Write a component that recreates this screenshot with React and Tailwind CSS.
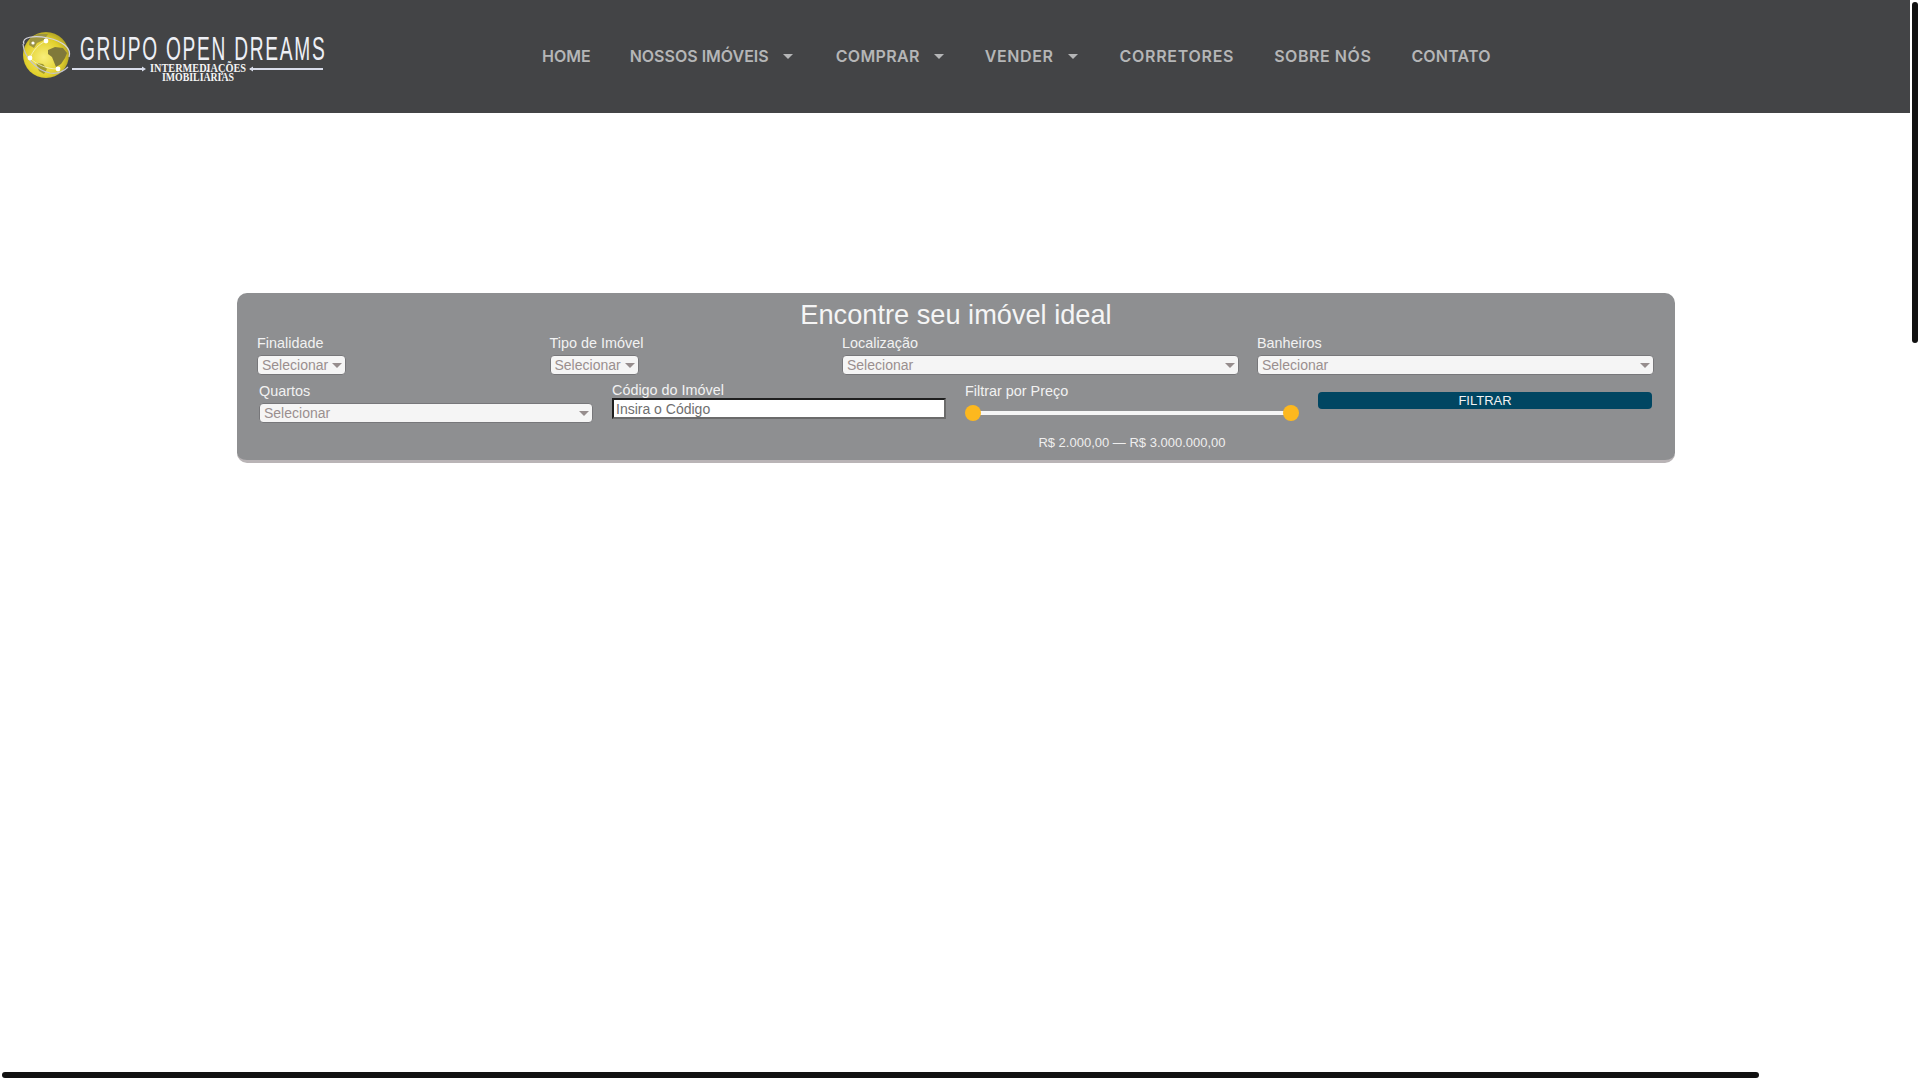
import { useState } from "react";

const font = "font-['Liberation_Sans',Arial,sans-serif]";

function Caret({ className }) {
  return (
    <svg width="10" height="5" viewBox="0 0 10 5" className={className}>
      <path d="M0 0h10L5 5z" fill="currentColor" />
    </svg>
  );
}

function Logo() {
  return (
    <svg width="340" height="113" viewBox="0 0 340 113" className="shrink-0">
      <defs>
        <radialGradient id="globe" cx="0.45" cy="0.55" r="0.62">
          <stop offset="0" stopColor="#f8ee7a" />
          <stop offset="0.65" stopColor="#e2d02c" />
          <stop offset="1" stopColor="#a39622" />
        </radialGradient>
      </defs>
      <circle cx="46" cy="55" r="23" fill="url(#globe)" />
      <path d="M48 50l7-3 8 1 4 5-2 5-4 6-5 3-2-5-2-5-4-3z" fill="#80793a" />
      <path d="M30 38l8-4 10 0-4 6-7 3-3 5-5-3z" fill="#9c9440" />
      <path d="M36 63l7 1 4 5-3 5-5-3z" fill="#9f972f" />
      <path d="M24 44c-3-7 10-9 24-6s24 10 21 19" fill="none" stroke="#d4d4dc" strokeWidth="1.2" />
      <path d="M23 44c1 12 12 26 27 29 6 1 13-1 18-6" fill="none" stroke="#c2c2cc" strokeWidth="1.2" />
      <path d="M30 58c3-8 9-14 16-17M30 58c7 7 17 11 28 11" fill="none" stroke="#f4f2c8" strokeWidth="0.8" />
      <circle cx="30" cy="58" r="2.4" fill="#fff" />
      <circle cx="58" cy="69" r="2.4" fill="#fff" />
      <circle cx="46" cy="41" r="2.4" fill="#fff" />
      <circle cx="33" cy="43" r="1.6" fill="#fff" />
      <text transform="translate(80 60) scale(0.58 1)" letterSpacing="3" fontFamily="'Liberation Sans'" fontSize="33" fill="#eef0f6">GRUPO OPEN DREAMS</text>
      <path d="M72 69h72M250 69h73" stroke="#d8dcea" strokeWidth="2" />
      <path d="M142 66.5l4 2.5-4 2.5zM253 66.5l-4 2.5 4 2.5z" fill="#d8dcea" />
      <text x="198" y="72" textAnchor="middle" fontFamily="'Liberation Serif'" fontWeight="700" fontSize="12" fill="#f4f4f4" textLength="96" lengthAdjust="spacingAndGlyphs">INTERMEDIAÇÕES</text>
      <text x="198" y="81" textAnchor="middle" fontFamily="'Liberation Serif'" fontWeight="700" fontSize="12" fill="#f4f4f4" textLength="72" lengthAdjust="spacingAndGlyphs">IMOBILIÁRIAS</text>
    </svg>
  );
}

function NavItem({ label, sub, className = "" }) {
  return (
    <a href="#" className={`flex items-center px-5 pb-px font-['Inter',sans-serif] text-[16px] font-semibold text-[#b5b6b7] ${className}`}>
      {label}
      {sub && <Caret className="ml-[14px] mr-[3px] text-[#b5b6b7]" />}
    </a>
  );
}

function FakeSelect({ className }) {
  return (
    <div className={`flex h-5 items-center justify-between rounded-[4px] border border-[#77777a] bg-[#f5f5f5] pl-1 pr-[3px] text-[14px] text-[#9a8f8f] ${className}`}>
      <span>Selecionar</span>
      <Caret className="text-[#968d8d]" />
    </div>
  );
}

function Label({ children }) {
  return <div className="h-4 text-[14.4px] leading-4 text-[#f2f2f2]">{children}</div>;
}

export default function App() {
  const [code, setCode] = useState("");

  return (
    <div className={`relative h-[1080px] w-[1920px] overflow-hidden bg-white ${font}`}>
      <header className="flex h-[113px] w-[1910px] items-center bg-[#434446]">
        <Logo />
        <nav className="ml-[182px] flex items-center">
          <NavItem label="HOME" />
          <NavItem label="NOSSOS IMÓVEIS" sub className="-ml-px" />
          <NavItem label="COMPRAR" sub className="tracking-[0.35px]" />
          <NavItem label="VENDER" sub className="-ml-[2px] tracking-[0.6px]" />
          <NavItem label="CORRETORES" className="-ml-px tracking-[0.7px]" />
          <NavItem label="SOBRE NÓS" className="tracking-[0.55px]" />
          <NavItem label="CONTATO" className="tracking-[0.2px]" />
        </nav>
      </header>

      <section className="ml-[237px] mt-[180px] h-[170px] w-[1438px] rounded-[10px] border-b-[3px] border-[#b9b4b6] bg-[#8e8f91]">
        <h2 className="h-[43px] pt-px text-center text-[27.2px] leading-[42px] text-[#f5f5f5]">Encontre seu imóvel ideal</h2>

        <div className="-mt-px flex pl-5">
          <div className="w-[292.5px]">
            <Label>Finalidade</Label>
            <FakeSelect className="mt-1 w-[89px]" />
          </div>
          <div className="w-[292.5px]">
            <Label>Tipo de Imóvel</Label>
            <FakeSelect className="mt-1 w-[89px]" />
          </div>
          <div className="w-[415px]">
            <Label>Localização</Label>
            <FakeSelect className="mt-1 w-[397px]" />
          </div>
          <div className="w-[397px]">
            <Label>Banheiros</Label>
            <FakeSelect className="mt-1 w-[397px]" />
          </div>
        </div>

        <div className="mt-[7px] flex gap-[19px] pl-[22px]">
          <div className="w-[334px] pt-px">
            <Label>Quartos</Label>
            <FakeSelect className="mt-1 w-[334px]" />
          </div>
          <div className="w-[334px]">
            <Label>Código do Imóvel</Label>
            <input
              value={code}
              onChange={(e) => setCode(e.target.value)}
              placeholder="Insira o Código"
              className="block h-[21px] w-[334px] border-2 border-t-[#1f1f1f] border-l-[#1f1f1f] border-b-[#6b6b6b] border-r-[#6b6b6b] bg-white px-[2px] pt-px text-[14px] text-[#555] outline-none placeholder:text-[#6e6e6e]"
            />
          </div>
          <div className="w-[334px] pt-px">
            <Label>Filtrar por Preço</Label>
            <div className="relative mt-[6px] h-4">
              <div className="absolute left-2 right-2 top-[6px] h-1 bg-[#f5f5f5]" />
              <div className="absolute left-0 top-0 size-4 rounded-full bg-[#fdb81e]" />
              <div className="absolute right-0 top-0 size-4 rounded-full bg-[#fdb81e]" />
            </div>
            <div className="mt-[14px] text-center text-[13px] leading-4 text-[#eeeeee]">R$ 2.000,00 — R$ 3.000.000,00</div>
          </div>
          <div className="w-[334px] pt-[10px]">
            <button className="block h-[17px] w-[334px] rounded-[4px] bg-[#004662] text-[13px] leading-[17px] text-[#f2f2f2]">FILTRAR</button>
          </div>
        </div>
      </section>

      <div className="absolute bottom-[2px] left-[2px] h-[6px] w-[1757px] rounded-full bg-[#111111]" />
      <div className="absolute right-[2px] top-[2px] h-[341px] w-[6px] rounded-full bg-[#111111]" />
    </div>
  );
}
